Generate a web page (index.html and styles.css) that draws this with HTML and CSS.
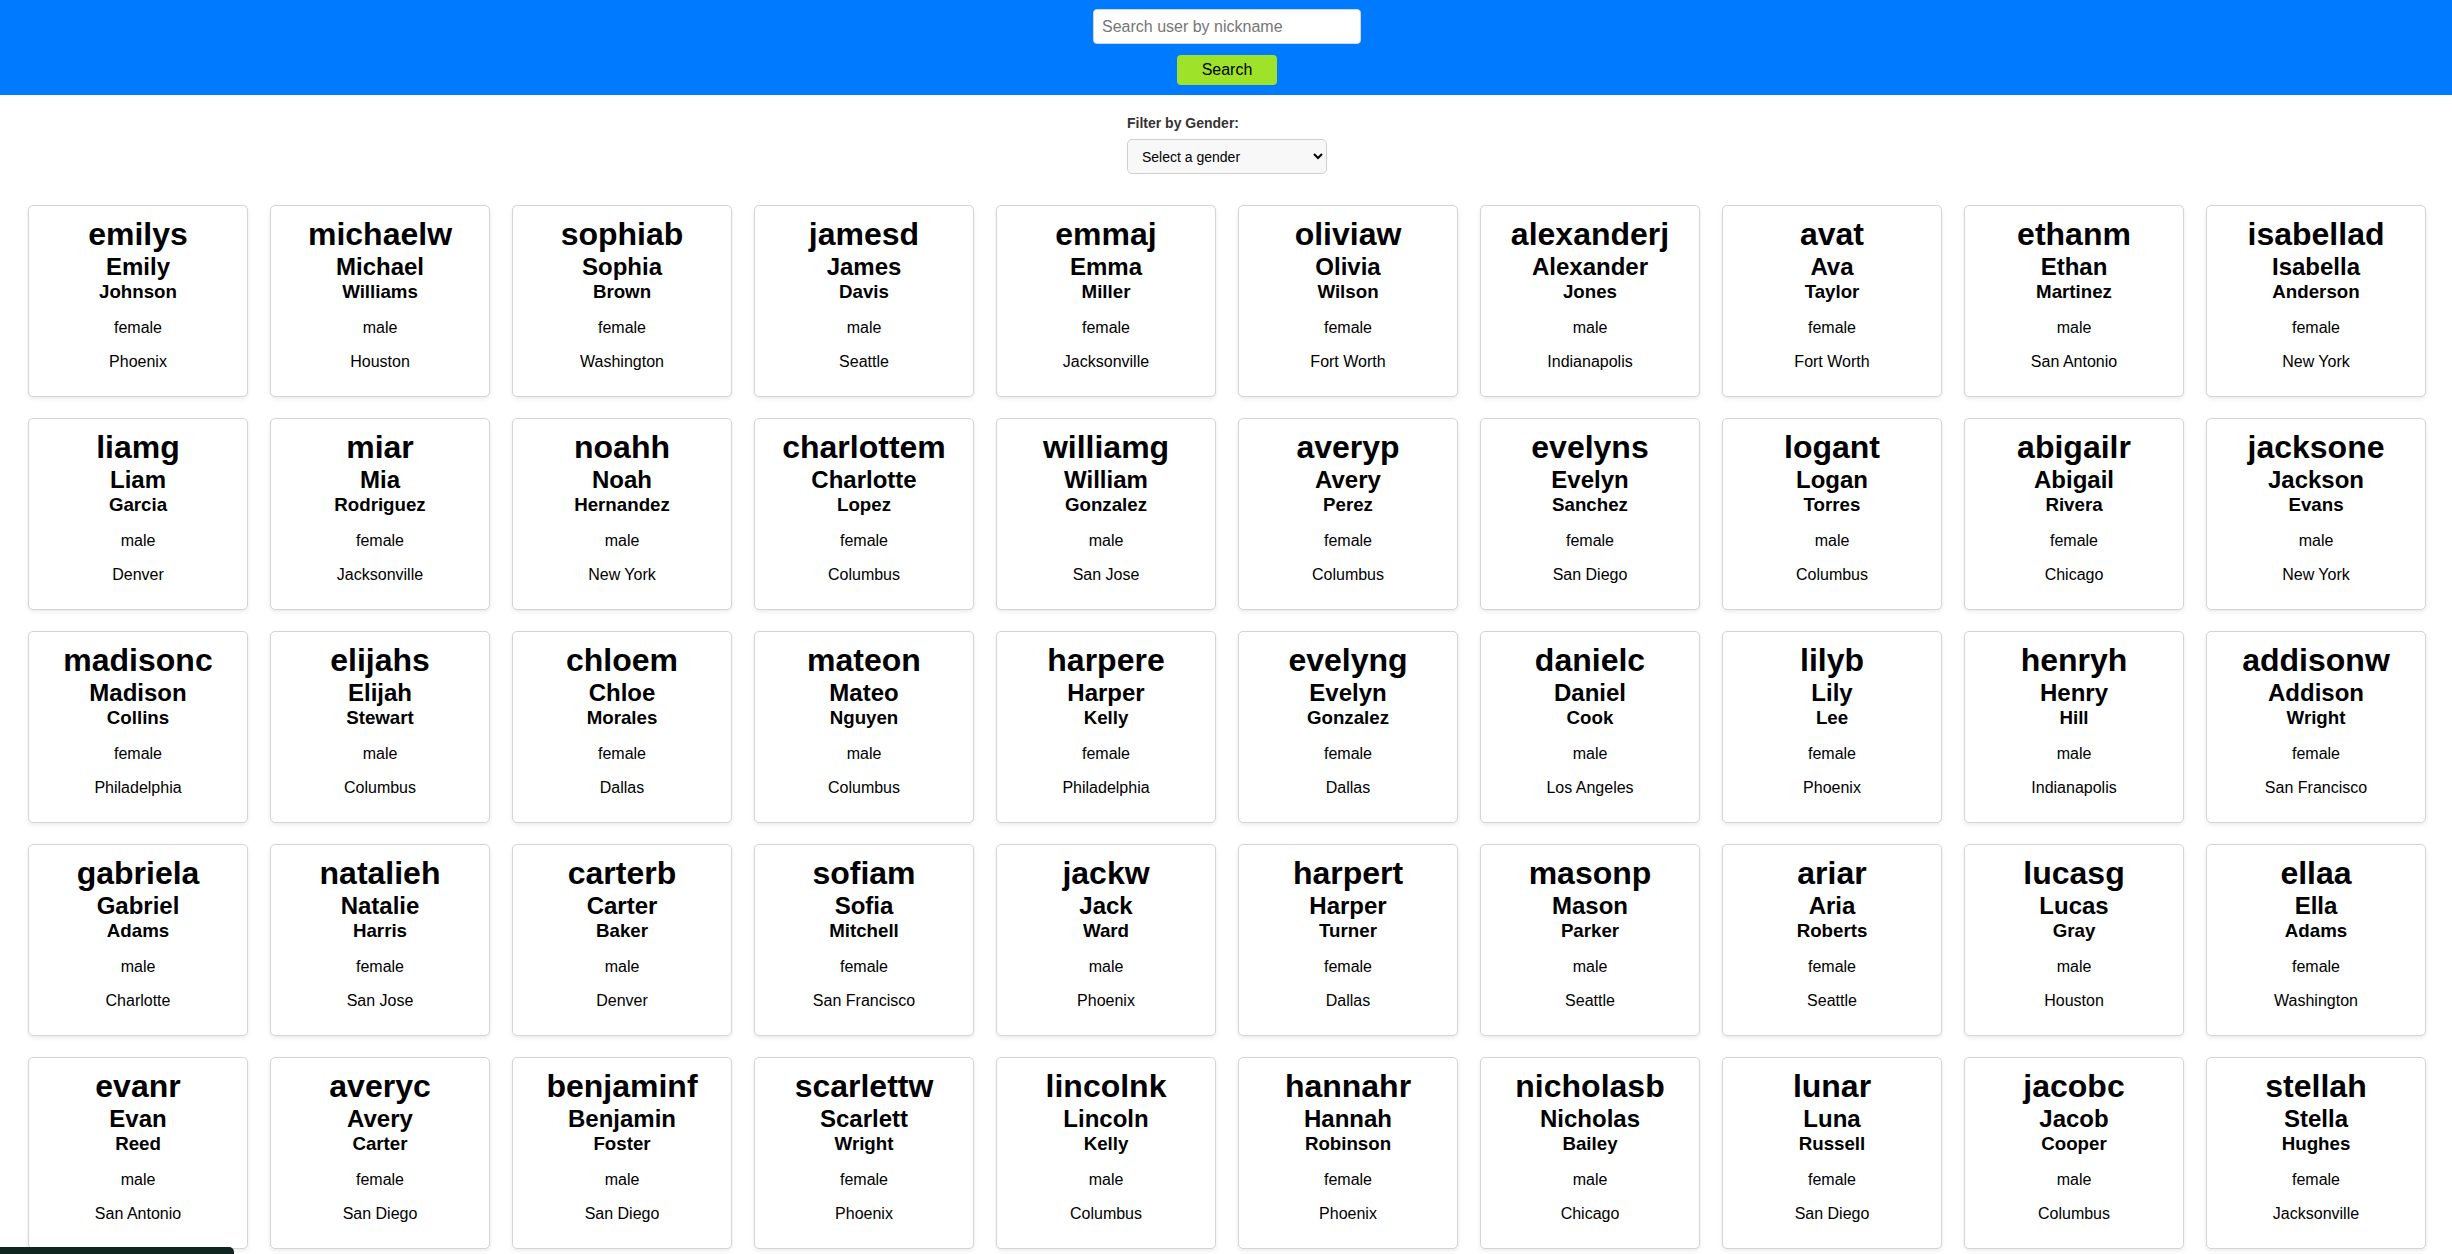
FILE: index.html
```html
<!DOCTYPE html>
<html lang="en">
<head>
<meta charset="utf-8">
<title>Users</title>
<link rel="stylesheet" href="styles.css">
</head>
<body>
<header class="topbar">
  <input class="search-input" type="text" placeholder="Search user by nickname">
  <button class="search-btn" type="button">Search</button>
</header>

<section class="filter">
  <label class="filter-label" for="gender">Filter by Gender:</label>
  <select class="filter-select" id="gender">
    <option>Select a gender</option>
    <option>male</option>
    <option>female</option>
  </select>
</section>

<main class="grid">
  <div class="card"><h1>emilys</h1><h2>Emily</h2><h3>Johnson</h3><p>female</p><p>Phoenix</p></div>
  <div class="card"><h1>michaelw</h1><h2>Michael</h2><h3>Williams</h3><p>male</p><p>Houston</p></div>
  <div class="card"><h1>sophiab</h1><h2>Sophia</h2><h3>Brown</h3><p>female</p><p>Washington</p></div>
  <div class="card"><h1>jamesd</h1><h2>James</h2><h3>Davis</h3><p>male</p><p>Seattle</p></div>
  <div class="card"><h1>emmaj</h1><h2>Emma</h2><h3>Miller</h3><p>female</p><p>Jacksonville</p></div>
  <div class="card"><h1>oliviaw</h1><h2>Olivia</h2><h3>Wilson</h3><p>female</p><p>Fort Worth</p></div>
  <div class="card"><h1>alexanderj</h1><h2>Alexander</h2><h3>Jones</h3><p>male</p><p>Indianapolis</p></div>
  <div class="card"><h1>avat</h1><h2>Ava</h2><h3>Taylor</h3><p>female</p><p>Fort Worth</p></div>
  <div class="card"><h1>ethanm</h1><h2>Ethan</h2><h3>Martinez</h3><p>male</p><p>San Antonio</p></div>
  <div class="card"><h1>isabellad</h1><h2>Isabella</h2><h3>Anderson</h3><p>female</p><p>New York</p></div>

  <div class="card"><h1>liamg</h1><h2>Liam</h2><h3>Garcia</h3><p>male</p><p>Denver</p></div>
  <div class="card"><h1>miar</h1><h2>Mia</h2><h3>Rodriguez</h3><p>female</p><p>Jacksonville</p></div>
  <div class="card"><h1>noahh</h1><h2>Noah</h2><h3>Hernandez</h3><p>male</p><p>New York</p></div>
  <div class="card"><h1>charlottem</h1><h2>Charlotte</h2><h3>Lopez</h3><p>female</p><p>Columbus</p></div>
  <div class="card"><h1>williamg</h1><h2>William</h2><h3>Gonzalez</h3><p>male</p><p>San Jose</p></div>
  <div class="card"><h1>averyp</h1><h2>Avery</h2><h3>Perez</h3><p>female</p><p>Columbus</p></div>
  <div class="card"><h1>evelyns</h1><h2>Evelyn</h2><h3>Sanchez</h3><p>female</p><p>San Diego</p></div>
  <div class="card"><h1>logant</h1><h2>Logan</h2><h3>Torres</h3><p>male</p><p>Columbus</p></div>
  <div class="card"><h1>abigailr</h1><h2>Abigail</h2><h3>Rivera</h3><p>female</p><p>Chicago</p></div>
  <div class="card"><h1>jacksone</h1><h2>Jackson</h2><h3>Evans</h3><p>male</p><p>New York</p></div>

  <div class="card"><h1>madisonc</h1><h2>Madison</h2><h3>Collins</h3><p>female</p><p>Philadelphia</p></div>
  <div class="card"><h1>elijahs</h1><h2>Elijah</h2><h3>Stewart</h3><p>male</p><p>Columbus</p></div>
  <div class="card"><h1>chloem</h1><h2>Chloe</h2><h3>Morales</h3><p>female</p><p>Dallas</p></div>
  <div class="card"><h1>mateon</h1><h2>Mateo</h2><h3>Nguyen</h3><p>male</p><p>Columbus</p></div>
  <div class="card"><h1>harpere</h1><h2>Harper</h2><h3>Kelly</h3><p>female</p><p>Philadelphia</p></div>
  <div class="card"><h1>evelyng</h1><h2>Evelyn</h2><h3>Gonzalez</h3><p>female</p><p>Dallas</p></div>
  <div class="card"><h1>danielc</h1><h2>Daniel</h2><h3>Cook</h3><p>male</p><p>Los Angeles</p></div>
  <div class="card"><h1>lilyb</h1><h2>Lily</h2><h3>Lee</h3><p>female</p><p>Phoenix</p></div>
  <div class="card"><h1>henryh</h1><h2>Henry</h2><h3>Hill</h3><p>male</p><p>Indianapolis</p></div>
  <div class="card"><h1>addisonw</h1><h2>Addison</h2><h3>Wright</h3><p>female</p><p>San Francisco</p></div>

  <div class="card"><h1>gabriela</h1><h2>Gabriel</h2><h3>Adams</h3><p>male</p><p>Charlotte</p></div>
  <div class="card"><h1>natalieh</h1><h2>Natalie</h2><h3>Harris</h3><p>female</p><p>San Jose</p></div>
  <div class="card"><h1>carterb</h1><h2>Carter</h2><h3>Baker</h3><p>male</p><p>Denver</p></div>
  <div class="card"><h1>sofiam</h1><h2>Sofia</h2><h3>Mitchell</h3><p>female</p><p>San Francisco</p></div>
  <div class="card"><h1>jackw</h1><h2>Jack</h2><h3>Ward</h3><p>male</p><p>Phoenix</p></div>
  <div class="card"><h1>harpert</h1><h2>Harper</h2><h3>Turner</h3><p>female</p><p>Dallas</p></div>
  <div class="card"><h1>masonp</h1><h2>Mason</h2><h3>Parker</h3><p>male</p><p>Seattle</p></div>
  <div class="card"><h1>ariar</h1><h2>Aria</h2><h3>Roberts</h3><p>female</p><p>Seattle</p></div>
  <div class="card"><h1>lucasg</h1><h2>Lucas</h2><h3>Gray</h3><p>male</p><p>Houston</p></div>
  <div class="card"><h1>ellaa</h1><h2>Ella</h2><h3>Adams</h3><p>female</p><p>Washington</p></div>

  <div class="card"><h1>evanr</h1><h2>Evan</h2><h3>Reed</h3><p>male</p><p>San Antonio</p></div>
  <div class="card"><h1>averyc</h1><h2>Avery</h2><h3>Carter</h3><p>female</p><p>San Diego</p></div>
  <div class="card"><h1>benjaminf</h1><h2>Benjamin</h2><h3>Foster</h3><p>male</p><p>San Diego</p></div>
  <div class="card"><h1>scarlettw</h1><h2>Scarlett</h2><h3>Wright</h3><p>female</p><p>Phoenix</p></div>
  <div class="card"><h1>lincolnk</h1><h2>Lincoln</h2><h3>Kelly</h3><p>male</p><p>Columbus</p></div>
  <div class="card"><h1>hannahr</h1><h2>Hannah</h2><h3>Robinson</h3><p>female</p><p>Phoenix</p></div>
  <div class="card"><h1>nicholasb</h1><h2>Nicholas</h2><h3>Bailey</h3><p>male</p><p>Chicago</p></div>
  <div class="card"><h1>lunar</h1><h2>Luna</h2><h3>Russell</h3><p>female</p><p>San Diego</p></div>
  <div class="card"><h1>jacobc</h1><h2>Jacob</h2><h3>Cooper</h3><p>male</p><p>Columbus</p></div>
  <div class="card"><h1>stellah</h1><h2>Stella</h2><h3>Hughes</h3><p>female</p><p>Jacksonville</p></div>
</main>

<div class="toast"></div>
</body>
</html>
```

FILE: styles.css
```css
html, body {
  margin: 0;
  padding: 0;
  background: #ffffff;
  font-family: "Liberation Sans", Arial, sans-serif;
  color: #000;
}

.topbar {
  background: #007bff;
  height: 95px;
  box-sizing: border-box;
  padding-top: 9px;
  display: flex;
  flex-direction: column;
  align-items: center;
  gap: 11px;
}

.search-input {
  width: 268px;
  height: 35px;
  box-sizing: border-box;
  margin-left: 2px;
  padding: 0 8px;
  border: 1px solid #cfd6de;
  border-radius: 4px;
  background: #fff;
  font-family: "Liberation Sans", Arial, sans-serif;
  font-size: 16px;
  color: #222;
  outline: none;
}

.search-input::placeholder {
  color: #767676;
}

.search-btn {
  width: 100px;
  height: 30px;
  box-sizing: border-box;
  margin-left: 2px;
  border: none;
  border-radius: 4px;
  background: #9ee32a;
  color: #000;
  font-family: "Liberation Sans", Arial, sans-serif;
  font-size: 16px;
  padding: 0;
}

.filter {
  width: 200px;
  margin: 20px auto 0;
  padding-left: 2px;
  display: flex;
  flex-direction: column;
  align-items: flex-start;
}

.filter-label {
  font-size: 14px;
  font-weight: bold;
  color: #333;
  line-height: 16px;
  margin-bottom: 8px;
}

.filter-select {
  width: 200px;
  height: 35px;
  box-sizing: border-box;
  padding: 0 8px 0 10px;
  border: 1px solid #cfcfcf;
  border-radius: 5px;
  background: #f8f8f8;
  font-family: "Liberation Sans", Arial, sans-serif;
  font-size: 14px;
  color: #000;
}

.grid {
  display: grid;
  grid-template-columns: repeat(10, 220px);
  column-gap: 22px;
  row-gap: 21px;
  padding: 31px 0 20px 28px;
}

.card {
  box-sizing: border-box;
  height: 192px;
  padding: 10px;
  border: 1px solid #d4d4d4;
  border-radius: 5px;
  box-shadow: 0 2px 4px rgba(0, 0, 0, 0.08);
  background: #fff;
  text-align: center;
  overflow: hidden;
}

.card h1 {
  margin: 0;
  font-size: 32px;
  line-height: 37px;
  font-weight: bold;
}

.card h2 {
  margin: 0;
  font-size: 24px;
  line-height: 28px;
  font-weight: bold;
}

.card h3 {
  margin: 0;
  font-size: 18.72px;
  line-height: 22px;
  font-weight: bold;
}

.card p {
  margin: 16px 0;
  font-size: 16px;
  line-height: 18px;
}

.card p:last-child {
  margin-bottom: 15px;
}

.toast {
  position: fixed;
  left: 0;
  bottom: -20px;
  width: 234px;
  height: 27px;
  background: #0f2520;
  border-top-right-radius: 5px;
}
```
